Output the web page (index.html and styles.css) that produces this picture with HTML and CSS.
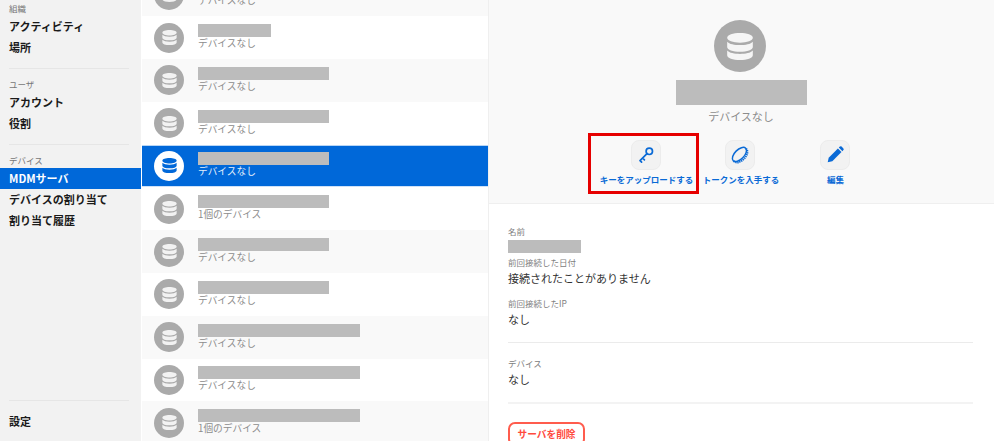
FILE: index.html
```html
<!DOCTYPE html>
<html lang="ja">
<head>
<meta charset="utf-8">
<title>MDMサーバ</title>
<link rel="stylesheet" href="styles.css">
</head>
<body>
<svg class="defs" width="0" height="0" aria-hidden="true">
  <symbol id="db" viewBox="2.500 1 19 20">
    <path d="M2.500 4.600C2.500 2.400 6.800 1 12 1s9.500 1.400 9.500 3.600S17.200 8.200 12 8.200 2.500 6.800 2.500 4.600z"/>
    <path d="M2.500 7.400C4 9.200 8 9.900 12 9.900s8-.7 9.500-2.500v3.900c0 2.100-4.300 3.500-9.500 3.500s-9.500-1.400-9.500-3.500z"/>
    <path d="M2.500 14C4 15.800 8 16.500 12 16.500s8-.7 9.500-2.500v3.500c0 2.100-4.300 3.500-9.500 3.500s-9.500-1.400-9.500-3.500z"/>
  </symbol>
</svg>
<div class="app">
  <nav class="sidebar">
    <div class="group first">
      <div class="group-label">組織</div>
      <a class="item">アクティビティ</a>
      <a class="item">場所</a>
    </div>
    <div class="group">
      <div class="group-label">ユーザ</div>
      <a class="item">アカウント</a>
      <a class="item">役割</a>
    </div>
    <div class="group">
      <div class="group-label">デバイス</div>
      <a class="item active">MDMサーバ</a>
      <a class="item">デバイスの割り当て</a>
      <a class="item">割り当て履歴</a>
    </div>
    <div class="sidebar-foot">
      <a class="item">設定</a>
    </div>
  </nav>

  <section class="list">
    <div class="rows">
      <div class="row alt"><span class="avatar"><svg class="db"><use href="#db"/></svg></span><div class="row-text"><span class="redact w131"></span><span class="sub">デバイスなし</span></div></div>
      <div class="row"><span class="avatar"><svg class="db"><use href="#db"/></svg></span><div class="row-text"><span class="redact w73"></span><span class="sub">デバイスなし</span></div></div>
      <div class="row alt"><span class="avatar"><svg class="db"><use href="#db"/></svg></span><div class="row-text"><span class="redact w131"></span><span class="sub">デバイスなし</span></div></div>
      <div class="row"><span class="avatar"><svg class="db"><use href="#db"/></svg></span><div class="row-text"><span class="redact w131"></span><span class="sub">デバイスなし</span></div></div>
      <div class="row selected"><span class="avatar"><svg class="db"><use href="#db"/></svg></span><div class="row-text"><span class="redact w131"></span><span class="sub">デバイスなし</span></div></div>
      <div class="row"><span class="avatar"><svg class="db"><use href="#db"/></svg></span><div class="row-text"><span class="redact w131"></span><span class="sub">1個のデバイス</span></div></div>
      <div class="row alt"><span class="avatar"><svg class="db"><use href="#db"/></svg></span><div class="row-text"><span class="redact w131"></span><span class="sub">デバイスなし</span></div></div>
      <div class="row"><span class="avatar"><svg class="db"><use href="#db"/></svg></span><div class="row-text"><span class="redact w131"></span><span class="sub">デバイスなし</span></div></div>
      <div class="row alt"><span class="avatar"><svg class="db"><use href="#db"/></svg></span><div class="row-text"><span class="redact w162"></span><span class="sub">デバイスなし</span></div></div>
      <div class="row"><span class="avatar"><svg class="db"><use href="#db"/></svg></span><div class="row-text"><span class="redact w162"></span><span class="sub">デバイスなし</span></div></div>
      <div class="row alt"><span class="avatar"><svg class="db"><use href="#db"/></svg></span><div class="row-text"><span class="redact w162"></span><span class="sub">1個のデバイス</span></div></div>
    </div>
  </section>

  <main class="detail">
    <header class="head">
      <span class="big-avatar"><svg class="big-db"><use href="#db"/></svg></span>
      <span class="redact big-name"></span>
      <span class="head-sub">デバイスなし</span>
      <div class="actions">
        <button class="action">
          <span class="tile">
            <svg class="ico" viewBox="0 0 20 20" fill="none" stroke="#0a6ad6" stroke-width="1.700" stroke-linecap="round">
              <circle cx="13.300" cy="6.300" r="3.200"/>
              <path d="M11 8.600 4 15.600M6.600 13l1.800 1.800M4 15.600l1.600 1.600"/>
            </svg>
          </span>
          <span class="action-label">キーをアップロードする</span>
        </button>
        <button class="action">
          <span class="tile">
            <svg class="ico" viewBox="0 0 20 20" fill="none" stroke="#0a6ad6" stroke-width="1.500">
              <g transform="rotate(-45 10 10)">
                <ellipse cx="10" cy="9.200" rx="8.800" ry="4.700"/>
                <path d="M1.200 9.800C1.200 13.300 5 15.500 10 15.500s8.800-2.200 8.800-5.700" stroke-width="2" stroke-dasharray="1.300 .7"/>
              </g>
            </svg>
          </span>
          <span class="action-label">トークンを入手する</span>
        </button>
        <button class="action">
          <span class="tile">
            <svg class="ico" viewBox="0 0 20 20" fill="#0a6ad6">
              <path d="M2.700 17.300l1-4.600L12.900 3.500l3.600 3.600-9.200 9.200z"/>
              <path d="M13.800 2.600l1.100-1a1.200 1.200 0 0 1 1.700 0l1.800 1.800a1.200 1.200 0 0 1 0 1.700l-1 1.100z"/>
            </svg>
          </span>
          <span class="action-label">編集</span>
        </button>
        <div class="highlight"></div>
      </div>
    </header>
    <div class="body">
      <div class="label">名前</div>
      <span class="redact name"></span>
      <div class="label date-label">前回接続した日付</div>
      <div class="value">接続されたことがありません</div>
      <div class="label ip-label">前回接続したIP</div>
      <div class="value">なし</div>
      <hr class="rule">
      <div class="label">デバイス</div>
      <div class="value">なし</div>
      <hr class="rule thick">
      <button class="danger">サーバを削除</button>
    </div>
  </main>
</div>
</body>
</html>
```
FILE: styles.css
```css
* { box-sizing: border-box; }
html, body { margin: 0; padding: 0; background: #fff; }
body {
  font-family: "Noto Sans CJK JP", "Noto Sans", sans-serif;
  color: #222;
  overflow: hidden;
}
.defs { position: absolute; }
.app { display: flex; height: 441px; overflow: hidden; }

/* sidebar */
.sidebar {
  width: 141px;
  flex: none;
  background: #f2f2f2;
  display: flex;
  flex-direction: column;
}
.group { padding-top: 8px; padding-bottom: 10px; border-top: 1px solid transparent; position: relative; }
.group::before {
  content: "";
  position: absolute;
  top: -1px; left: 9px; right: 12px;
  height: 1px;
  background: #e6e6e6;
}
.group.first { padding-top: 1px; border-top: 0; }
.group.first::before { display: none; }
.group-label {
  height: 15px;
  padding-left: 9px;
  font-size: 8.500px;
  line-height: 15px;
  color: #777;
}
.item {
  display: block;
  height: 21px;
  padding-left: 9px;
  font-size: 11px;
  line-height: 20px;
  font-weight: 700;
  color: #1a1a1a;
  white-space: nowrap;
}
.item.active { background: #0068d9; color: #fff; }
.sidebar-foot {
  margin: auto 12px 0 9px;
  padding: 10px 0 9px;
  border-top: 1px solid #e6e6e6;
}
.sidebar-foot .item { padding-left: 0; }

/* list */
.list {
  width: 347px;
  flex: none;
  margin-left: 1px;
  overflow: hidden;
  border-right: 1px solid #efefef;
}
.rows { margin-top: -26.600px; }
.row {
  height: 42.800px;
  display: flex;
  align-items: center;
  gap: 14px;
  padding-left: 12px;
  background: #fff;
}
.row.alt { background: #f9f9f9; }
.row.selected {
  background: #0068d9;
  border-top: 1px solid #b9d6f5;
  border-bottom: 1px solid #cfe2f8;
}
.avatar {
  width: 30px;
  height: 30px;
  flex: none;
  border-radius: 50%;
  background: #aaa;
  display: flex;
  align-items: center;
  justify-content: center;
}
.db { width: 15px; height: 15px; fill: #f2f2f2; }
.row.selected .avatar { background: #fff; }
.row.selected .db { fill: #0068d9; }
.row-text { display: flex; flex-direction: column; padding-bottom: 2px; }
.redact { display: block; background: #bcbcbc; }
.row-text .redact { height: 13px; }
.w73 { width: 73px; }
.w131 { width: 131px; }
.w162 { width: 162px; }
.sub {
  font-size: 9.700px;
  line-height: 12px;
  color: #8c8c8c;
}
.row.selected .sub { color: #e4effb; }

/* detail */
.detail { flex: 1; min-width: 0; display: flex; flex-direction: column; }
.head {
  height: 204px;
  flex: none;
  padding: 20px 1px 0 0;
  background: #f9f9f9;
  border-bottom: 1px solid #efefef;
  display: flex;
  flex-direction: column;
  align-items: center;
}
.big-avatar {
  width: 52px;
  height: 52px;
  margin-left: -2px;
  border-radius: 50%;
  background: #aaa;
  display: flex;
  align-items: center;
  justify-content: center;
}
.big-db { width: 26px; height: 27px; fill: #f5f5f5; }
.big-name { width: 131px; height: 25px; margin: 8px 0 0 1px; }
.head-sub { font-size: 11px; line-height: 22px; color: #8c8c8c; }
.actions { display: flex; position: relative; margin-top: 13px; }
.action {
  width: 94.500px;
  padding: 0;
  border: 0;
  background: none;
  font-family: inherit;
  display: flex;
  flex-direction: column;
  align-items: center;
}
.tile {
  width: 30px;
  height: 30px;
  margin-left: -2px;
  border-radius: 8px;
  background: #f2f2f2;
  border: 1px solid #ececec;
  display: flex;
  align-items: center;
  justify-content: center;
}
.ico { width: 20px; height: 20px; }
.action-label {
  margin-top: 3px;
  font-size: 8.500px;
  line-height: 12px;
  font-weight: 700;
  color: #0a6ad6;
  white-space: nowrap;
}
.highlight {
  position: absolute;
  left: -11px;
  top: -7px;
  width: 111px;
  height: 61px;
  border: 3px solid #e60000;
}
.body { padding: 20px 21px 0 19px; }
.label { font-size: 8.500px; line-height: 14px; color: #808080; }
.name { width: 73px; height: 13px; margin-top: 2px; }
.date-label { margin-top: 2px; }
.ip-label { margin-top: 9px; }
.value { font-size: 11px; line-height: 18px; color: #333; }
.rule { margin: 14px 0 13px; border: 0; height: 1px; background: #ebebeb; }
.rule.thick { height: 2px; background: #f3f3f3; margin: 14px 0 18px; }
.danger {
  display: block;
  width: 77px;
  height: 24px;
  padding: 0;
  border: 2px solid #ff5c4d;
  border-radius: 7px;
  background: #fff;
  font-family: inherit;
  font-size: 9.700px;
  font-weight: 700;
  line-height: 18px;
  color: #ff4a3d;
}
```
